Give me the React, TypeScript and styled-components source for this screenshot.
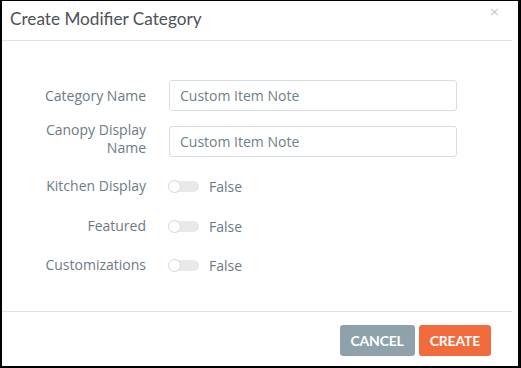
import React from 'react';
import styled, { createGlobalStyle } from 'styled-components';

const Global = createGlobalStyle`
  html, body {
    margin: 0;
    padding: 0;
    background: #000;
  }
`;

const Frame = styled.div`
  box-sizing: border-box;
  width: 521px;
  height: 368px;
  border-style: solid;
  border-color: #000;
  border-width: 1px 3px 2px 2px;
  background: #fff;
  display: flex;
  flex-direction: column;
`;

const Header = styled.div`
  position: relative;
  height: 39px;
  margin-right: 6px;
  border-bottom: 1px solid #e3e3e3;
  display: flex;
  align-items: center;
  padding-left: 8px;
`;

const Title = styled.h2`
  margin: 0 0 4px;
  font-family: Lato, 'Liberation Sans', sans-serif;
  font-weight: 400;
  font-size: 17.2px;
  color: #4d5257;
`;

const Close = styled.span`
  position: absolute;
  right: 12px;
  top: 3px;
  font-family: 'DejaVu Sans', sans-serif;
  font-size: 13px;
  color: #c8c8c8;
`;

const Body = styled.div`
  flex: 1;
  padding: 39px 0 0 8px;
  display: flex;
  flex-direction: column;
`;

const Row = styled.div<{ $top: number; $h: number; $align?: string }>`
  display: flex;
  align-items: ${(p) => p.$align || 'center'};
  margin-top: ${(p) => p.$top}px;
  height: ${(p) => p.$h}px;
`;

const Label = styled.div`
  width: 136px;
  text-align: right;
  font-family: 'Open Sans', sans-serif;
  font-size: 14px;
  line-height: 18px;
  color: #6e7a84;
  margin-right: 23px;
`;

const Input = styled.input`
  box-sizing: border-box;
  width: 288px;
  height: 31px;
  border: 1px solid #d9dde0;
  border-radius: 3px;
  padding: 0 10px;
  font-family: 'Open Sans', sans-serif;
  font-size: 14px;
  color: #6e7f8a;
  outline: none;
`;

const Track = styled.span`
  position: relative;
  width: 30px;
  height: 11px;
  border-radius: 6px;
  background: #e9e9e9;
  margin-right: 10px;
`;

const Knob = styled.span`
  position: absolute;
  left: -1px;
  top: -1px;
  box-sizing: border-box;
  width: 13px;
  height: 13px;
  border-radius: 50%;
  background: #fff;
  border: 1px solid #d6d6d6;
`;

const Value = styled.span`
  font-family: 'Open Sans', sans-serif;
  font-size: 14px;
  color: #6e7a84;
`;

const Footer = styled.div`
  margin-right: 6px;
  border-top: 1px solid #e3e3e3;
  display: flex;
  justify-content: flex-end;
  gap: 4px;
  padding: 13px 21px 10px 0;
`;

const Btn = styled.button<{ $bg: string }>`
  height: 31px;
  padding: 0 11px;
  border: none;
  border-radius: 3px;
  background: ${(p) => p.$bg};
  color: #fff;
  font-family: Lato, 'Liberation Sans', sans-serif;
  font-weight: 700;
  font-size: 14px;
  letter-spacing: -0.2px;
`;

const Toggle = ({ top, label }: { top: number; label: string }) => (
  <Row $top={top} $h={20}>
    <Label>{label}</Label>
    <Track>
      <Knob />
    </Track>
    <Value>False</Value>
  </Row>
);

export default function App() {
  return (
    <>
      <Global />
      <Frame>
        <Header>
          <Title>Create Modifier Category</Title>
          <Close>×</Close>
        </Header>
        <Body>
          <Row $top={0} $h={31}>
            <Label>Category Name</Label>
            <Input defaultValue="Custom Item Note" />
          </Row>
          <Row $top={10} $h={36} $align="flex-end">
            <Label>
              Canopy Display
              <br />
              Name
            </Label>
            <Input defaultValue="Custom Item Note" />
          </Row>
          <Toggle top={19} label="Kitchen Display" />
          <Toggle top={20} label="Featured" />
          <Toggle top={19} label="Customizations" />
        </Body>
        <Footer>
          <Btn $bg="#8fa2ac">CANCEL</Btn>
          <Btn $bg="#f26b3c">CREATE</Btn>
        </Footer>
      </Frame>
    </>
  );
}
